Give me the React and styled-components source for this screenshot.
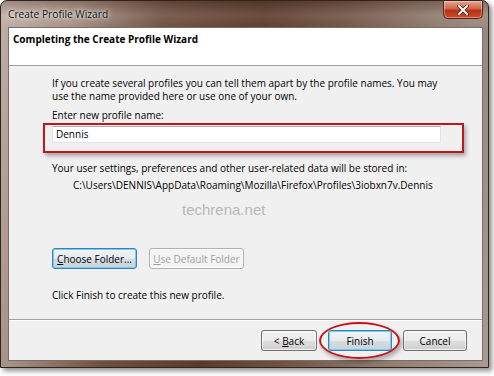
import React from 'react'
import styled, { createGlobalStyle } from 'styled-components'

const Global = createGlobalStyle`
  html, body { margin: 0; padding: 0; background: #fff; }
  body { font-family: "Open Sans", "Noto Sans", sans-serif; font-size: 10px; color: #000; }
`

const Page = styled.div`
  width: 494px;
  height: 376px;
  overflow: hidden;
`

const Frame = styled.div`
  width: 489px;
  height: 368px;
  box-sizing: border-box;
  padding: 0 5px 6px 7px;
  display: flex;
  flex-direction: column;
  border-radius: 7px 7px 0 0;
  border: 1px solid #2e2420;
  background:
    linear-gradient(to bottom, rgba(60,30,20,0.25), rgba(255,255,255,0.1) 14px, rgba(255,255,255,0) 30px),
    linear-gradient(100deg, #bfafa6 0%, #a48e82 14%, #6d4f40 30%, #5a3a2b 48%, #6e5142 62%, #8f7a6e 80%, #a99a92 100%);
  box-shadow: 3px 3px 5px rgba(0,0,0,0.45);
`

const TitleBar = styled.div`
  height: 26px;
  display: flex;
  align-items: flex-start;
  flex-shrink: 0;
`

const Title = styled.div`
  font-size: 10.2px;
  line-height: 26px;
  color: #111;
  text-shadow: 0 0 6px rgba(255,255,255,0.9), 0 0 3px rgba(255,255,255,0.9);
`

const CloseButton = styled.div`
  margin-left: auto;
  width: 40px;
  height: 18px;
  box-sizing: border-box;
  border: 1px solid #5a2318;
  border-top: none;
  border-radius: 0 0 5px 5px;
  background: linear-gradient(to bottom, #e8a48e 0%, #d0664c 45%, #b43318 55%, #d24a2c 100%);
  box-shadow: inset 0 0 0 1px rgba(255,255,255,0.35);
  display: flex;
  align-items: center;
  justify-content: center;
`

const Client = styled.div`
  flex: 1;
  display: flex;
  flex-direction: column;
  background: #f0f0f0;
  border: 1px solid #7c6e66;
`

const Header = styled.div`
  height: 38px;
  box-sizing: border-box;
  background: #fff;
  border-bottom: 1px solid #a0a0a0;
  padding: 3px 0 0 4px;
  font-weight: 700;
  font-size: 10px;
  line-height: 16px;
`

const Body = styled.div`
  flex: 1;
  padding: 11px 0 0 43px;
  display: flex;
  flex-direction: column;
`

const Para = styled.p`
  margin: ${p => p.$mt || 0}px 0 0 ${p => p.$ml || 0}px;
  line-height: 13px;
  white-space: nowrap;
`

const Annotated = styled.div`
  position: relative;
  margin-top: 4px;
`

const TextInput = styled.div`
  width: 389px;
  height: 17px;
  box-sizing: border-box;
  border: 1px solid #e2e3ea;
  border-top-color: #abadb3;
  background: #fff;
  padding: 0 3px;
  line-height: 15px;
`

const RedBox = styled.div`
  position: absolute;
  left: -9px;
  top: -3px;
  width: 421px;
  height: 30px;
  box-sizing: border-box;
  border: 2px solid #c4151c;
  box-shadow: 2px 3px 4px rgba(0,0,0,0.3);
`

const Watermark = styled.div`
  font-family: "Liberation Sans", Arial, sans-serif;
  font-size: 15px;
  color: #b8b8b8;
  margin: 9px 0 0 130px;
  line-height: 18px;
`

const ButtonRow = styled.div`
  display: flex;
  gap: 12px;
  margin-top: 29px;
`

const Button = styled.div`
  width: ${p => p.$w}px;
  height: 21px;
  box-sizing: border-box;
  border-radius: 3px;
  border: 1px solid ${p => p.$focus ? '#3c7fb1' : p.$disabled ? '#adb2b5' : '#707070'};
  background: ${p => p.$disabled
    ? '#f4f4f4'
    : p.$focus
      ? 'linear-gradient(to bottom, #f0f4f7 0%, #e6ebef 50%, #d6dde2 51%, #c9d2d8 100%)'
      : 'linear-gradient(to bottom, #f2f2f2 0%, #ebebeb 50%, #dddddd 51%, #cfcfcf 100%)'};
  box-shadow: ${p => p.$focus ? 'inset 0 0 0 1px #6fcff5' : 'inset 0 0 0 1px rgba(255,255,255,0.7)'};
  color: ${p => p.$disabled ? '#a0a0a0' : '#000'};
  display: flex;
  align-items: center;
  justify-content: center;
  white-space: nowrap;
  font-size: 10px;
  line-height: 1;
  u { text-decoration: underline; }
`

const Footer = styled.div`
  height: 41px;
  flex-shrink: 0;
  border-top: 1px solid #a0a0a0;
  box-shadow: inset 0 1px 0 #fff;
  display: flex;
  justify-content: flex-end;
  align-items: flex-start;
  padding: 10px 15px 0 0;
  box-sizing: border-box;
  gap: 11px;
`

const EllipseWrap = styled.div`
  position: relative;
`

const RedEllipse = styled.div`
  position: absolute;
  left: -9px;
  top: -8px;
  width: 81px;
  height: 37px;
  box-sizing: border-box;
  border: 2px solid #c4151c;
  border-radius: 50%;
  box-shadow: 2px 3px 4px rgba(0,0,0,0.3);
`

const CloseIcon = () => (
  <svg width="12" height="10" viewBox="0 0 12 10">
    <path d="M2 1 L10 9 M10 1 L2 9" stroke="#4a1a10" strokeWidth="3.4" strokeLinecap="square" />
    <path d="M2 1 L10 9 M10 1 L2 9" stroke="#ffffff" strokeWidth="2" strokeLinecap="square" />
  </svg>
)

export default function App() {
  return (
    <Page>
      <Global />
      <Frame>
        <TitleBar>
          <Title>Create Profile Wizard</Title>
          <CloseButton><CloseIcon /></CloseButton>
        </TitleBar>
        <Client>
          <Header>Completing the Create Profile Wizard</Header>
          <Body>
            <Para>If you create several profiles you can tell them apart by the profile names. You may</Para>
            <Para>use the name provided here or use one of your own.</Para>
            <Para $mt={6}>Enter new profile name:</Para>
            <Annotated>
              <TextInput>Dennis</TextInput>
              <RedBox />
            </Annotated>
            <Para $mt={19}>Your user settings, preferences and other user-related data will be stored in:</Para>
            <Para $mt={4} $ml={21}>C:\Users\DENNIS\AppData\Roaming\Mozilla\Firefox\Profiles\3iobxn7v.Dennis</Para>
            <Watermark>techrena.net</Watermark>
            <ButtonRow>
              <Button $w={85} $focus><span><u>C</u>hoose Folder...</span></Button>
              <Button $w={95} $disabled><span><u>U</u>se Default Folder</span></Button>
            </ButtonRow>
            <Para $mt={20}>Click Finish to create this new profile.</Para>
          </Body>
          <Footer>
            <Button $w={56}><span>&lt; <u>B</u>ack</span></Button>
            <EllipseWrap>
              <Button $w={64} $focus>Finish</Button>
              <RedEllipse />
            </EllipseWrap>
            <Button $w={64}>Cancel</Button>
          </Footer>
        </Client>
      </Frame>
    </Page>
  )
}
